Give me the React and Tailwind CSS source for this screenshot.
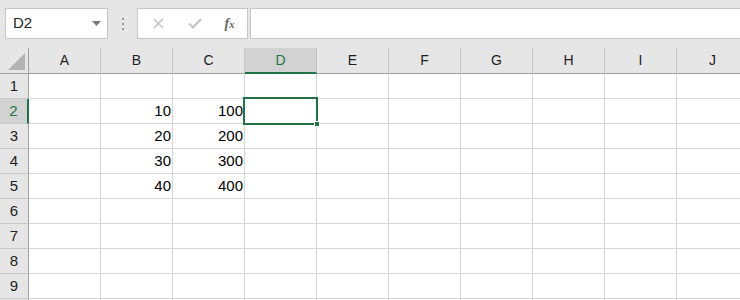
import React from "react";

const columns = ["A", "B", "C", "D", "E", "F", "G", "H", "I", "J"];
const rows = [1, 2, 3, 4, 5, 6, 7, 8, 9, 10];

// cell values keyed by "col+row"
const values = {
  B2: "10", C2: "100",
  B3: "20", C3: "200",
  B4: "30", C4: "300",
  B5: "40", C5: "400",
};

const font = { fontFamily: '"Liberation Sans", Arial, sans-serif' };

function FormulaBar() {
  return (
    <div className="h-[48px] bg-[#e6e6e6] relative flex items-start pt-[8px] pl-[5px]">
      {/* Name box */}
      <div className="w-[103px] h-[31px] bg-white border border-[#c6c6c6] flex items-center justify-between pl-[7px] pr-[6px]">
        <span className="text-[15px] text-[#222]">D2</span>
        <svg width="9" height="5" viewBox="0 0 9 5">
          <path d="M0 0 H9 L4.5 5 Z" fill="#7a7a7a" />
        </svg>
      </div>

      {/* separator dots */}
      <div className="w-[29px] h-[31px] flex flex-col items-center justify-center gap-[3px]">
        <div className="w-[2px] h-[2px] bg-[#9a9a9a]" />
        <div className="w-[2px] h-[2px] bg-[#9a9a9a]" />
        <div className="w-[2px] h-[2px] bg-[#9a9a9a]" />
      </div>

      {/* cancel / enter / fx */}
      <div className="w-[111px] h-[31px] bg-white border border-[#c6c6c6] flex items-center">
        <div className="w-[38px] flex justify-center pl-[2px]">
          <svg width="11" height="11" viewBox="0 0 11 11">
            <path d="M1 1 L10 10 M10 1 L1 10" stroke="#c4c4c4" strokeWidth="1.6" />
          </svg>
        </div>
        <div className="w-[38px] flex justify-center">
          <svg width="14" height="11" viewBox="0 0 14 11">
            <path d="M1 5.5 L5 9.5 L13 1" stroke="#c4c4c4" strokeWidth="2" fill="none" />
          </svg>
        </div>
        <div className="flex-1 flex justify-center pr-[2px]">
          <span
            className="text-[14px] italic text-[#666] font-bold"
            style={{ fontFamily: '"Liberation Serif", "Times New Roman", serif' }}
          >
            f<span className="text-[11px]">x</span>
          </span>
        </div>
      </div>

      {/* formula input */}
      <div className="ml-[2px] flex-1 h-[31px] bg-white border border-[#c6c6c6] -mr-[4px]" />
    </div>
  );
}

function Sheet() {
  return (
    <div className="relative">
      {/* column headers */}
      <div className="flex h-[26px]">
        <div className="w-[29px] shrink-0 bg-[#e6e6e6] border-r border-b border-[#a0a0a0] flex items-end justify-end pr-[3px] pb-[3px]">
          <svg width="17" height="17" viewBox="0 0 17 17">
            <path d="M17 0 V17 H0 Z" fill="#b4b4b4" />
          </svg>
        </div>
        {columns.map((c) =>
          c === "D" ? (
            <div
              key={c}
              className="w-[72px] shrink-0 bg-[#d2d2d2] border-r border-[#c0c0c0] border-b-2 border-b-[#217346] flex items-center justify-center text-[14px] text-[#217346]"
            >
              {c}
            </div>
          ) : (
            <div
              key={c}
              className="w-[72px] shrink-0 bg-[#e6e6e6] border-r border-[#c8c8c8] border-b border-b-[#a0a0a0] flex items-center justify-center text-[14px] text-[#222]"
            >
              {c}
            </div>
          )
        )}
      </div>

      {/* rows (row 10 only peeks in at the bottom edge, no label visible) */}
      {rows.map((r) => (
        <div key={r} className="flex h-[25px]">
          {r === 2 ? (
            <div className="w-[29px] shrink-0 bg-[#d2d2d2] border-r-2 border-r-[#217346] border-b border-b-[#c8c8c8] flex items-center justify-center text-[15px] text-[#217346]">
              {r}
            </div>
          ) : (
            <div className="w-[29px] shrink-0 bg-[#e6e6e6] border-r border-r-[#a0a0a0] border-b border-b-[#c8c8c8] flex items-center justify-center text-[15px] text-[#222]">
              {r < 10 ? r : ""}
            </div>
          )}
          {columns.map((c) => (
            <div
              key={c}
              className="w-[72px] shrink-0 bg-white border-r border-b border-[#d4d4d4] flex items-center justify-end pr-[1px] text-[15px] text-black"
            >
              {values[c + r] || ""}
            </div>
          ))}
        </div>
      ))}

      {/* active cell D2 */}
      <div className="absolute left-[243px] top-[49px] w-[75px] h-[28px] border-2 border-[#217346] pointer-events-none" />
      <div className="absolute left-[314px] top-[73px] w-[6px] h-[6px] bg-[#217346] border border-white" />
    </div>
  );
}

export default function App() {
  return (
    <div className="w-[740px] h-[300px] overflow-hidden bg-white" style={font}>
      <FormulaBar />
      <Sheet />
    </div>
  );
}
